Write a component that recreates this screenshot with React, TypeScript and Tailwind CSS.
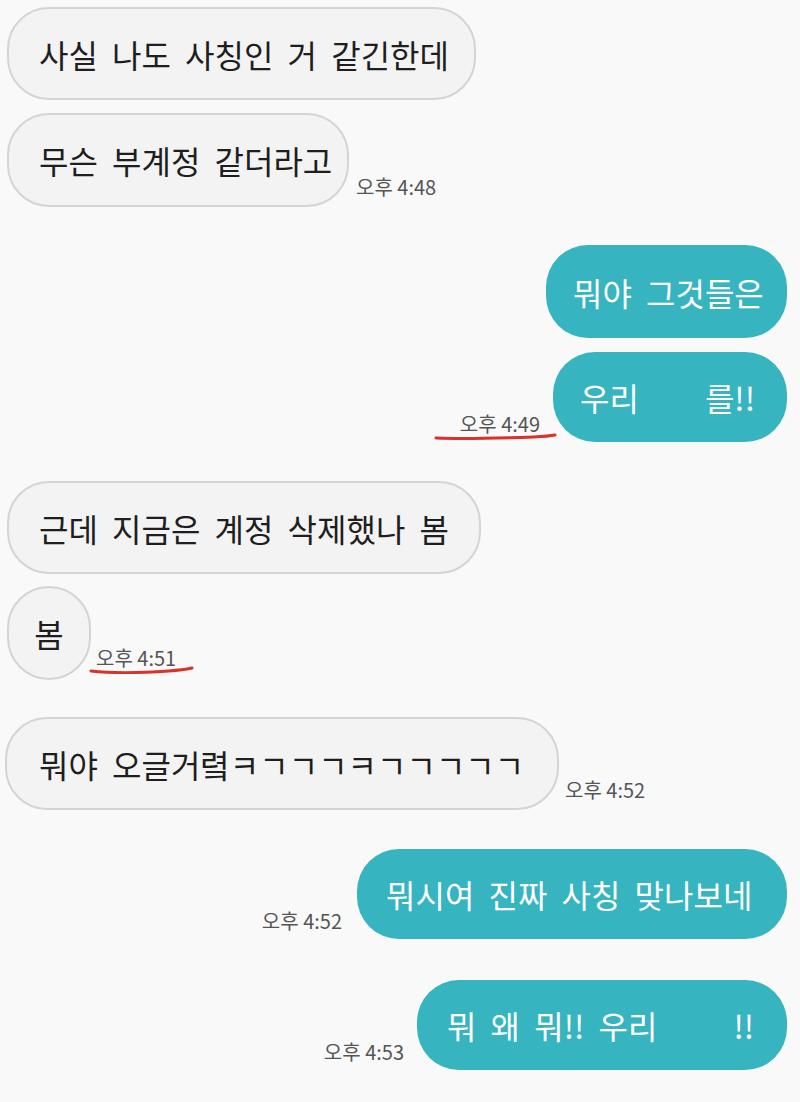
import React from 'react';

type Side = 'left' | 'right';

function Stamp({ time, mark }: { time: string; mark?: 'a' | 'b' }) {
    return (
        <div className="relative shrink-0 text-[20px] leading-none text-[#555] whitespace-nowrap">
            {time}
            {mark === 'a' && (
                <svg className="absolute left-[-26px] top-[18px]" width="124" height="10" viewBox="0 0 124 10">
                    <path d="M2 6 C 30 7, 70 6, 100 5 C 110 4.5, 116 4, 121 3" stroke="#d8322a" strokeWidth="3" fill="none" strokeLinecap="round" />
                </svg>
            )}
            {mark === 'b' && (
                <svg className="absolute left-[-7px] top-[17px]" width="106" height="10" viewBox="0 0 106 10">
                    <path d="M2 6 C 20 8, 50 8, 80 6 C 92 5, 98 4, 103 3" stroke="#d8322a" strokeWidth="3" fill="none" strokeLinecap="round" />
                </svg>
            )}
        </div>
    );
}

function Bubble({ side, className, children }: { side: Side; className: string; children: React.ReactNode }) {
    const look =
        side === 'left'
            ? 'bg-[#f3f3f3] border-2 border-[#d4d4d4] text-[#1e1e1e]'
            : 'bg-[#36b4bf] text-white';
    return (
        <div className={`flex shrink-0 items-center rounded-[42px] whitespace-nowrap text-[32px] leading-none [word-spacing:7px] ${look} ${className}`}>
            {children}
        </div>
    );
}

const Gap = ({ w }: { w: string }) => <span className={`inline-block ${w}`} />;

export default function App() {
    return (
        <div className="min-h-[1102px] w-[800px] bg-[#f9f9f9] font-['Noto_Sans_CJK_KR','Noto_Sans',sans-serif] overflow-hidden">
            <div className="flex flex-col pt-[7px]">
                <div className="flex items-end pl-[7px]">
                    <Bubble side="left" className="h-[93px] w-[469px] pl-[30px]">사실 나도 사칭인 거 같긴한데</Bubble>
                </div>
                <div className="mt-[13px] flex items-end gap-[7px] pl-[7px]">
                    <Bubble side="left" className="h-[94px] w-[342px] pl-[30px]">무슨 부계정 같더라고</Bubble>
                    <div className="mb-[10px]"><Stamp time="오후 4:48" /></div>
                </div>

                <div className="mt-[38px] flex items-end justify-end pr-[13px]">
                    <Bubble side="right" className="h-[93px] w-[241px] pl-[27px]">뭐야 그것들은</Bubble>
                </div>
                <div className="mt-[14px] flex items-end justify-end gap-[13px] pr-[13px]">
                    <div className="mb-[8px]"><Stamp time="오후 4:49" mark="a" /></div>
                    <Bubble side="right" className="h-[90px] w-[234px] pl-[27px]">
                        우리<Gap w="w-[66px]" />를!!
                    </Bubble>
                </div>

                <div className="mt-[39px] flex items-end pl-[7px]">
                    <Bubble side="left" className="h-[93px] w-[474px] pl-[30px]">근데 지금은 계정 삭제했나 봄</Bubble>
                </div>
                <div className="mt-[12px] flex items-end gap-[5px] pl-[7px]">
                    <Bubble side="left" className="h-[94px] w-[84px] justify-center">봄</Bubble>
                    <div className="mb-[12px]"><Stamp time="오후 4:51" mark="b" /></div>
                </div>

                <div className="mt-[37px] flex items-end gap-[6px] pl-[5px]">
                    <Bubble side="left" className="h-[93px] w-[554px] pl-[32px]">
                        뭐야 오글거렼<span className="tracking-[0px]">ㅋㄱㄱㄱㅋㄱㄱㄱㄱㄱ</span>
                    </Bubble>
                    <div className="mb-[10px]"><Stamp time="오후 4:52" /></div>
                </div>

                <div className="mt-[39px] flex items-end justify-end gap-[15px] pr-[13px]">
                    <div className="mb-[8px]"><Stamp time="오후 4:52" /></div>
                    <Bubble side="right" className="h-[90px] w-[430px] pl-[29px]">뭐시여 진짜 사칭 맞나보네</Bubble>
                </div>
                <div className="mt-[41px] flex items-end justify-end gap-[13px] pr-[13px]">
                    <div className="mb-[8px]"><Stamp time="오후 4:53" /></div>
                    <Bubble side="right" className="h-[90px] w-[370px] pl-[30px]">
                        뭐 왜 뭐!! 우리<Gap w="w-[76px]" />!!
                    </Bubble>
                </div>
            </div>
        </div>
    );
}
